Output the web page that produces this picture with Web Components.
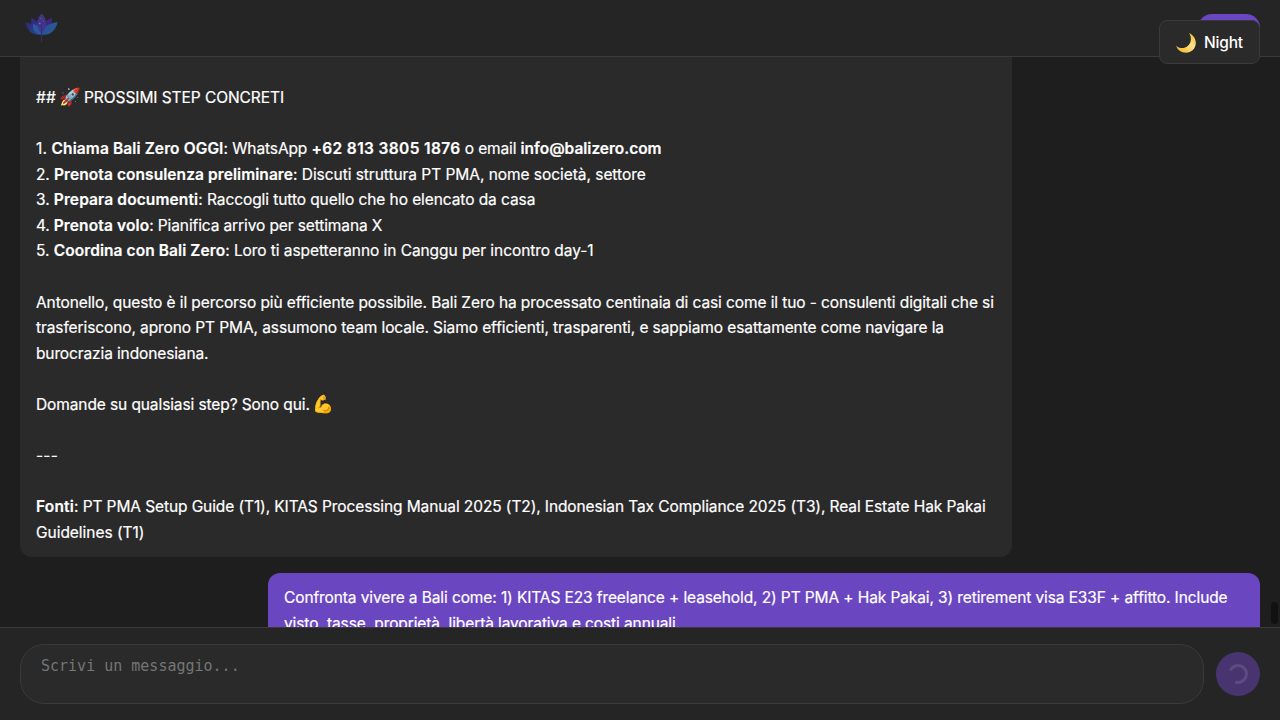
<!DOCTYPE html>
<html lang="it">
<head>
<meta charset="utf-8">
<title>Chat</title>
<style>
html,body{height:100%;margin:0;overflow:hidden;background:#1e1e1e}
body{font-family:Inter,"Noto Sans",sans-serif;color:#fff}
</style>
</head>
<body>
<chat-app></chat-app>

<template id="t-app">
<style>
:host{display:flex;flex-direction:column;height:100vh;position:relative;background:#1e1e1e;font-size:15.5px}
</style>
<chat-header></chat-header>
<message-list>
<chat-message><text-line><text-run s=".184">##</text-run><emoji-icon>🚀</emoji-icon><text-run s="-.066">PROSSIMI STEP CONCRETI</text-run></text-line><text-line></text-line><text-line><text-run s=".124">1. </text-run><text-run bold s=".113">Chiama Bali Zero OGGI</text-run><text-run s="-.1">: WhatsApp </text-run><text-run bold s=".359">+62 813 3805 1876</text-run><text-run s="-.133"> o email </text-run><text-run bold s="-.013">info@balizero.com</text-run></text-line><text-line><text-run s="-.093">2. </text-run><text-run bold s=".079">Prenota consulenza preliminare</text-run><text-run s="-.045">: Discuti struttura PT PMA, nome società, settore</text-run></text-line><text-line><text-run s="-.1">3. </text-run><text-run bold s=".131">Prepara documenti</text-run><text-run s="-.081">: Raccogli tutto quello che ho elencato da casa</text-run></text-line><text-line><text-run s="-.2">4. </text-run><text-run bold s=".126">Prenota volo</text-run><text-run s="-.114">: Pianifica arrivo per settimana X</text-run></text-line><text-line><text-run s="-.05">5. </text-run><text-run bold s=".084">Coordina con Bali Zero</text-run><text-run s="-.065">: Loro ti aspetteranno in Canggu per incontro day-1</text-run></text-line><text-line></text-line><text-line><text-run s="-.098">Antonello, questo è il percorso più efficiente possibile. Bali Zero ha processato centinaia di casi come il tuo - consulenti digitali che si</text-run></text-line><text-line><text-run s="-.097">trasferiscono, aprono PT PMA, assumono team locale. Siamo efficienti, trasparenti, e sappiamo esattamente come navigare la</text-run></text-line><text-line><text-run s="-.12">burocrazia indonesiana.</text-run></text-line><text-line></text-line><text-line><text-run s="-.1">Domande su qualsiasi step? Sono qui.</text-run><emoji-icon>💪</emoji-icon></text-line><text-line></text-line><text-line><text-run s=".204">---</text-run></text-line><text-line></text-line><text-line><text-run bold s=".188">Fonti</text-run><text-run s="-.098">: PT PMA Setup Guide (T1), KITAS Processing Manual 2025 (T2), Indonesian Tax Compliance 2025 (T3), Real Estate Hak Pakai</text-run></text-line><text-line><text-run s="-.03">Guidelines (T1)</text-run></text-line></chat-message>
<chat-message user><text-line><text-run s="-.104">Confronta vivere a Bali come: 1) KITAS E23 freelance + leasehold, 2) PT PMA + Hak Pakai, 3) retirement visa E33F + affitto. Include</text-run></text-line><text-line><text-run s="-.104">visto, tasse, proprietà, libertà lavorativa e costi annuali.</text-run></text-line></chat-message>
</message-list>
<chat-composer></chat-composer>
<theme-toggle></theme-toggle>
</template>

<template id="t-header">
<style>
:host{display:flex;flex:none;box-sizing:border-box;height:57px;padding:0 20px;justify-content:space-between;align-items:flex-start;background:#252525;border-bottom:1px solid #3a3a3a}
svg{display:block;margin:10px 0 0 2px}
.btn{width:62px;height:28px;margin-top:14px;border-radius:14px;background:#6b46c1}
</style>
<svg width="40" height="36" viewBox="0 0 40 36">
<defs>
<linearGradient id="a" x1="0" y1="0" x2="0" y2="1"><stop offset="0" stop-color="#4b3290"/><stop offset="1" stop-color="#3b388f"/></linearGradient>
<linearGradient id="b" x1="0" y1="0" x2="1" y2="1"><stop offset="0" stop-color="#2f2878"/><stop offset="1" stop-color="#27478f"/></linearGradient>
</defs>
<path d="M9.300 8C8.500 14 10 21 19 25C21 18 17 11 9.300 8Z" fill="#322c85"/>
<path d="M29.800 7.500C30.500 14 29 21 20 25C18 18 22 11 29.800 7.500Z" fill="#3f2780"/>
<path d="M3.500 12.500C5 20 10 26 19.500 24.500C17 17 11 13.500 3.500 12.500Z" fill="url(#b)"/>
<path d="M35.700 12C33.500 21 28 26 19.500 24.500C22 17 28 13 35.700 12Z" fill="#28588f"/>
<path d="M11 14C17 15 19.500 19 19.500 24.500C13 24 10 20 11 14Z" fill="#2a62a4" opacity=".8"/>
<path d="M28.500 14C23 15 20 19 19.500 24.500C26 24 29 20 28.500 14Z" fill="#28529a" opacity=".7"/>
<path d="M19.600 3.500C14 9 13.500 17 19.500 24C25.500 17 25.500 9 19.600 3.500Z" fill="url(#a)" opacity=".9"/>
<path d="M19.500 15V24" stroke="#342b78" stroke-width=".8"/>
<path d="M19.500 24V32" stroke="#3d2b63" stroke-width="1"/>
<circle cx="19" cy="8.500" r=".6" fill="#6768b5"/><circle cx="21.300" cy="11" r=".5" fill="#6170b8"/><circle cx="17.800" cy="13.500" r=".8" fill="#459bc0"/>
</svg>
<div class="btn"></div>
</template>

<template id="t-list">
<style>
:host{display:flex;flex:1;min-height:0;box-sizing:border-box;flex-direction:column;justify-content:flex-start;gap:16px;padding:0 20px;overflow:hidden;position:relative}
.thumb{position:absolute;right:2px;top:545px;width:7px;height:22px;border-radius:4px;background:#111}
</style>
<slot></slot><div class="thumb"></div>
</template>

<template id="t-message">
<style>
:host{display:block;flex:none;box-sizing:border-box;width:80%;padding:27.800px 16px 11.600px;border-radius:0 0 12px 12px;background:#2a2a2a;line-height:25.600px}
:host([user]){align-self:flex-end;padding:12px 16px;border-radius:12px;background:#6b46c1}
</style>
<slot></slot>
</template>

<template id="t-line"><style>:host{display:block;height:25.600px;white-space:pre}</style><slot></slot></template>
<template id="t-run"><style>:host{display:inline;white-space:pre;-webkit-text-stroke:.2px #fff}:host([bold]){font-weight:600}</style><slot></slot></template>
<template id="t-emoji"><style>:host{display:inline-block;width:22px;height:20px;margin:0 3px;font:17.500px/20px "Noto Color Emoji",sans-serif}</style><slot></slot></template>

<template id="t-toggle">
<style>
:host{position:absolute;top:20px;right:20px;box-sizing:border-box;width:101px;height:44px;display:flex;align-items:center;padding-left:16px;gap:8px;border:1px solid #3a3a3a;border-radius:8px;background:#2a2a2a}
.label{font-weight:500;letter-spacing:-.2px}
svg{display:block;margin-top:1px}
</style>
<svg width="20" height="20" viewBox="0 0 20 20"><defs><linearGradient id="m" x1=".9" y1=".1" x2=".3" y2="1"><stop offset="0" stop-color="#f3c444"/><stop offset=".5" stop-color="#ffe28a"/><stop offset="1" stop-color="#f5b92e"/></linearGradient></defs><path d="M13 0C17 1.700 19.800 5.500 19.800 10C19.800 15.500 15.400 19.700 10 19.700C5 19.700 1.400 16.800 0 12.500C3 15.800 8.500 16 12 12.800C15.600 9.500 15.800 4 13 0Z" fill="url(#m)"/></svg>
<span class="label">Night</span>
</template>

<template id="t-composer">
<style>
:host{display:flex;flex:none;box-sizing:border-box;height:93px;padding:16px 20px;gap:12px;align-items:center;background:#252525;border-top:1px solid #3a3a3a}
.field{flex:1;box-sizing:border-box;height:60px;padding:12px 20px;border:1px solid #3a3a3a;border-radius:24px;background:#2a2a2a;color:#757575;font:15px/18px "DejaVu Sans Mono",monospace}
.send{width:44px;height:44px;border-radius:50%;background:#483570;display:flex;align-items:center;justify-content:center}
svg{display:block}
</style>
<div class="field">Scrivi un messaggio...</div>
<div class="send"><svg width="24" height="24" viewBox="0 0 24 24"><path d="M4.300 8.300A8.500 8.500 0 1 1 9.200 20" fill="none" stroke="#5e4c80" stroke-width="3"/></svg></div>
</template>

<script>
function define(name, templateId, setup) {
  customElements.define(name, class extends HTMLElement {
    connectedCallback() {
      if (this.shadowRoot) return;
      this.attachShadow({ mode: 'open' }).append(document.getElementById(templateId).content.cloneNode(true));
      if (setup) setup(this);
    }
  });
}
define('text-run', 't-run', el => { el.style.letterSpacing = el.getAttribute('s') + 'px'; });
define('text-line', 't-line');
define('emoji-icon', 't-emoji');
define('chat-message', 't-message');
define('message-list', 't-list');
define('chat-header', 't-header');
define('chat-composer', 't-composer');
define('theme-toggle', 't-toggle');
define('chat-app', 't-app');
</script>
</body>
</html>
